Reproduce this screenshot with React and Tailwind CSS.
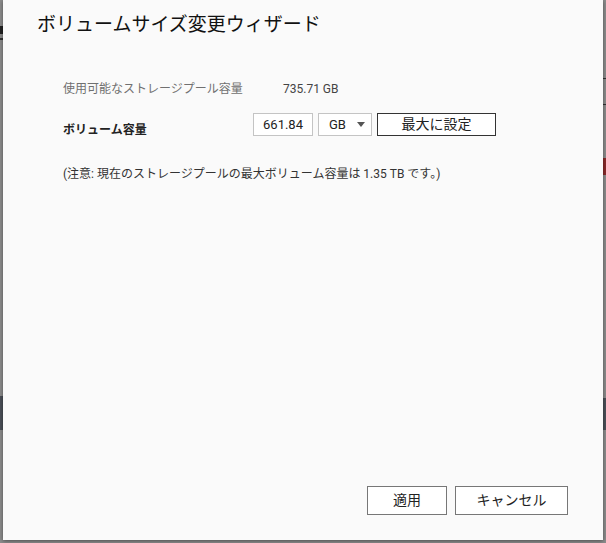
export default function App() {
  const font = { fontFamily: 'Roboto, "Noto Sans CJK JP", sans-serif' };
  return (
    <div className="relative w-[606px] h-[543px] bg-[#8c8c8c] overflow-hidden" style={font}>
      {/* dimmed page behind the dialog */}
      <div className="absolute left-0 top-[26px] w-[3px] h-[8px] bg-[#222]" />
      <div className="absolute left-0 top-[38px] w-[3px] h-[2px] bg-[#333]" />
      <div className="absolute left-0 top-[396px] w-[3px] h-[34px] bg-[#4b5058]" />
      <div className="absolute right-0 top-[78px] w-[3px] h-[1px] bg-[#333]" />
      <div className="absolute right-0 top-[104px] w-[3px] h-[1px] bg-[#333]" />
      <div className="absolute right-0 top-[158px] w-[3px] h-[17px] bg-[#8a2a2a]" />
      <div className="absolute right-0 top-[398px] w-[3px] h-[32px] bg-[#4b5058]" />

      <div className="relative ml-[3px] w-[600px] h-[540px] bg-[#fafafa] shadow-[0_1px_4px_rgba(0,0,0,0.45)] flex flex-col">
        <h1 className="pt-[12px] pl-[34px] text-[19px] leading-[26px] text-[#111] font-normal">
          ボリュームサイズ変更ウィザード
        </h1>

        <div className="pl-[60px] flex flex-col">
          <div className="mt-[43px] flex items-center text-[12px] leading-[16px]">
            <span className="w-[220px] text-[#707070]">使用可能なストレージプール容量</span>
            <span className="text-[#444]">735.71 GB</span>
          </div>

          <div className="mt-[16px] flex items-start">
            <span className="w-[190px] mt-[9px] text-[12px] leading-[16px] font-bold text-[#222]">
              ボリューム容量
            </span>
            <div className="w-[60px] h-[23px] border border-[#c4c4c4] bg-white flex items-center justify-center text-[13px] text-[#222]">
              661.84
            </div>
            <div className="ml-[5px] w-[54px] h-[23px] border border-[#c4c4c4] bg-white flex items-center pl-[10px] text-[13px] text-[#222]">
              <span>GB</span>
              <svg className="ml-[11px]" width="8" height="5" viewBox="0 0 8 5">
                <path d="M0 0h8L4 5z" fill="#555" />
              </svg>
            </div>
            <button className="ml-[5px] w-[119px] h-[23px] border border-[#333] bg-white text-[14px] text-[#222] flex items-center justify-center">
              最大に設定
            </button>
          </div>

          <p className="mt-[28px] text-[12px] leading-[16px] text-[#333]">
            (注意: 現在のストレージプールの最大ボリューム容量は 1.35 TB です。)
          </p>
        </div>

        <div className="mt-auto pb-[25px] pr-[35px] flex justify-end gap-[8px]">
          <button className="w-[80px] h-[29px] border border-[#777] bg-white text-[14px] text-[#222]">
            適用
          </button>
          <button className="w-[113px] h-[29px] border border-[#777] bg-white text-[14px] text-[#222]">
            キャンセル
          </button>
        </div>
      </div>
    </div>
  );
}
